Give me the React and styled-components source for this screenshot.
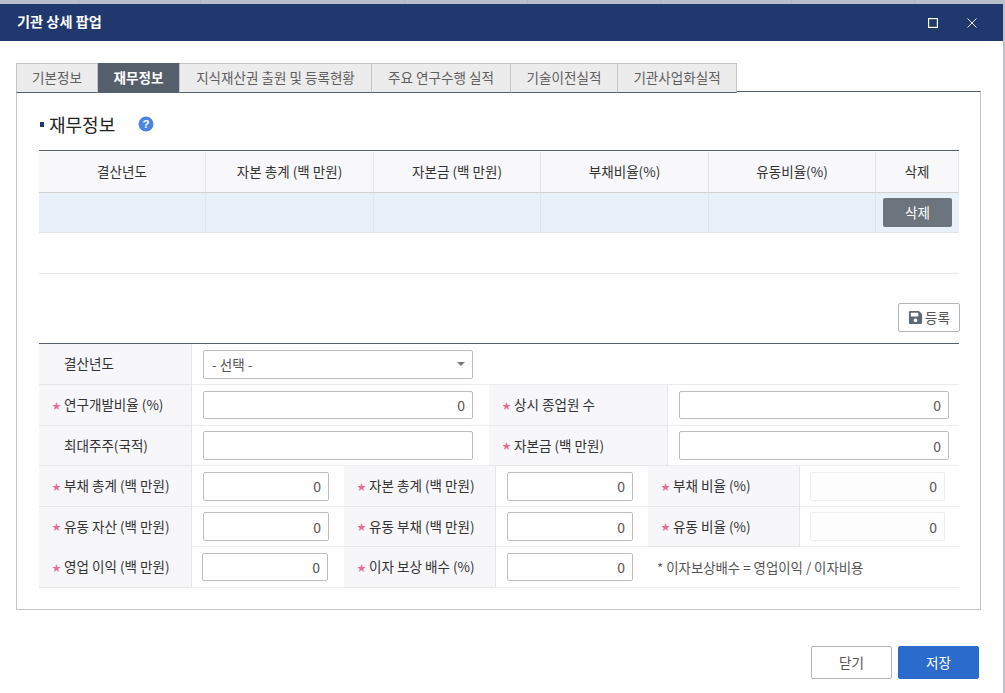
import React from "react";
import styled, { createGlobalStyle } from "styled-components";
import { FaSave } from "react-icons/fa";

const GlobalStyle = createGlobalStyle`
  html, body {
    margin: 0;
    padding: 0;
    background: #bfc1c4;
    overflow: hidden;
  }
  body {
    font-family: "Noto Sans CJK KR", "Noto Sans", sans-serif;
    font-size: 13.55px;
    color: #333;
  }
`;

const Page = styled.div`
  width: 1005px;
  height: 693px;
`;

const TopStrip = styled.div`
  height: 4px;
  background: #b9c0cb;
  display: grid;
  grid-template-columns: 79px 122px 204px 123px 133px 131px 123px 1fr;
`;

const StripCell = styled.div`
  border-right: 1px solid #b0b6c0;
  &:last-child {
    border-right: 0;
  }
`;

const Modal = styled.div`
  width: 1003px;
  height: 689px;
  background: #fff;
  display: flex;
  flex-direction: column;
`;

const TitleBar = styled.div`
  height: 37px;
  flex: none;
  background: #20386e;
  color: #fff;
  display: flex;
  align-items: center;
  padding: 0 26px 0 17px;
`;

const Title = styled.div`
  flex: 1;
  font-size: 14.2px;
  font-weight: 700;
  padding-bottom: 3px;
`;

const WindowButtons = styled.div`
  display: flex;
  align-items: center;
  gap: 29px;
`;

const Body = styled.div`
  padding: 22px 22px 0 16px;
  flex: 1;
`;

const Tabs = styled.div`
  display: flex;
  height: 30px;
  position: relative;
  z-index: 1;
`;

const Tab = styled.div`
  box-sizing: border-box;
  width: ${(p) => p.$w}px;
  height: 30px;
  padding-bottom: 2px;
  display: flex;
  align-items: center;
  justify-content: center;
  background: ${(p) => (p.$active ? "#555f6b" : "#ececec")};
  color: ${(p) => (p.$active ? "#fff" : "#5f5f5f")};
  font-weight: ${(p) => (p.$active ? 700 : 400)};
  border: 1px solid #c4c4c4;
  border-left-width: ${(p) => (p.$first ? 1 : 0)}px;
  border-bottom: 1px solid #555f6b;
  ${(p) => p.$active && "border-color: #555f6b; border-right-color: #c4c4c4;"}
`;

const Panel = styled.div`
  box-sizing: border-box;
  margin-top: -2px;
  width: 965px;
  height: 519px;
  border: 1px solid #c4c4c4;
  border-top-color: #555f6b;
  padding: 0 21px 0 22px;
`;

const Heading = styled.div`
  height: 58px;
  display: flex;
  align-items: center;
  font-size: 18px;
  color: #222;
  padding-top: 6px;
  box-sizing: border-box;
`;

const Bullet = styled.span`
  width: 4px;
  height: 5px;
  background: #20386e;
  margin: 0 5px 0 1px;
`;

const HelpIcon = styled.svg`
  width: 16px;
  height: 16px;
  margin-left: 23px;
`;

const TableGrid = styled.div`
  display: grid;
  grid-template-columns: 167px 168px 167px 168px 167px 83px;
  border-top: 1px solid #555f6b;
  padding-top: 1px;
`;

const HeadCell = styled.div`
  box-sizing: border-box;
  height: 41px;
  padding-bottom: 2px;
  display: flex;
  align-items: center;
  justify-content: center;
  background: #f8f8fa;
  border-bottom: 1px solid #d2d2d2;
  border-right: 1px solid #e4e4e4;
  &:last-child {
    border-right: 0;
  }
`;

const DataCell = styled.div`
  box-sizing: border-box;
  height: 40px;
  display: flex;
  align-items: center;
  justify-content: center;
  background: #e8f0fa;
  border-bottom: 1px solid #e4e4e4;
  border-right: 1px solid #e4e4e4;
  &:last-child {
    border-right: 0;
  }
`;

const DeleteButton = styled.div`
  box-sizing: border-box;
  width: 69px;
  height: 29px;
  padding-bottom: 2px;
  border-radius: 2px;
  background: #6c757d;
  color: #fff;
  display: flex;
  align-items: center;
  justify-content: center;
`;

const EmptyRow = styled.div`
  box-sizing: border-box;
  height: 41px;
  border-bottom: 1px solid #e9e9e9;
`;

const FormActions = styled.div`
  display: flex;
  justify-content: flex-end;
  margin: 29px -1px 11px 0;
`;

const RegisterButton = styled.div`
  box-sizing: border-box;
  width: 62px;
  height: 29px;
  padding-bottom: 2px;
  border: 1px solid #b4b4b4;
  border-radius: 2px;
  display: flex;
  align-items: center;
  justify-content: center;
  gap: 2px;
  color: #555;
  svg {
    color: #5c6873;
    margin-top: 1px;
  }
`;

const Form = styled.div`
  border-top: 1px solid #555f6b;
`;

const Row = styled.div`
  display: grid;
  height: ${(p) => p.$h || 41}px;
  grid-template-columns: ${(p) => p.$cols};
`;

const Label = styled.div`
  box-sizing: border-box;
  display: flex;
  align-items: center;
  padding: 0 0 2px 25px;
  background: #f7f7fa;
  color: #333;
  border-bottom: 1px solid ${(p) => (p.$merged ? "#f7f7fa" : "#e6e6e6")};
  border-right: 1px solid #e6e6e6;
  white-space: nowrap;
`;

const Star = styled.span`
  color: #ec6b94;
  font-size: 9px;
  width: 12px;
  margin: 2px 0 0 -12px;
`;

const Value = styled.div`
  box-sizing: border-box;
  display: flex;
  align-items: center;
  padding-left: ${(p) => p.$pad || 11}px;
  border-bottom: 1px solid #ececec;
`;

const Input = styled.div`
  box-sizing: border-box;
  width: ${(p) => p.$w}px;
  height: ${(p) => p.$h || 28}px;
  flex: none;
  border: 1px solid ${(p) => (p.$readOnly ? "#eeeeee" : "#bdbdbd")};
  border-radius: 2px;
  background: ${(p) => (p.$readOnly ? "#fdfdfd" : "#fff")};
  display: flex;
  align-items: center;
  justify-content: flex-end;
  padding-right: 7px;
  font-size: 14px;
  color: #555;
`;

const Select = styled.div`
  box-sizing: border-box;
  width: 270px;
  height: 29px;
  border: 1px solid #bdbdbd;
  border-radius: 2px;
  display: flex;
  align-items: center;
  justify-content: space-between;
  padding: 0 7px 0 8px;
  color: #555;
`;

const Caret = styled.span`
  width: 0;
  height: 0;
  border-left: 4px solid transparent;
  border-right: 4px solid transparent;
  border-top: 4px solid #777;
`;

const Note = styled.span`
  margin-left: 24px;
  font-size: 13.4px;
  color: #555;
  white-space: nowrap;
`;

const Footer = styled.div`
  display: flex;
  justify-content: flex-end;
  gap: 6px;
  margin: 36px 2px 0 0;
`;

const FooterButton = styled.div`
  box-sizing: border-box;
  width: 81px;
  height: 33px;
  padding-bottom: 2px;
  border-radius: 2px;
  border: 1px solid ${(p) => (p.$primary ? "#2b6bcb" : "#b4b4b4")};
  background: ${(p) => (p.$primary ? "#2b6bcb" : "#fff")};
  color: ${(p) => (p.$primary ? "#fff" : "#555")};
  display: flex;
  align-items: center;
  justify-content: center;
`;

const tabs = [
  { label: "기본정보", w: 82 },
  { label: "재무정보", w: 82, active: true },
  { label: "지식재산권 출원 및 등록현황", w: 192 },
  { label: "주요 연구수행 실적", w: 139 },
  { label: "기술이전실적", w: 107 },
  { label: "기관사업화실적", w: 119 },
];

const headers = ["결산년도", "자본 총계 (백 만원)", "자본금 (백 만원)", "부채비율(%)", "유동비율(%)", "삭제"];

const COLS_2 = "153px 297px 179px 291px";
const COLS_3 = "153px 152px 152px 152px 152px 159px";

const Field = ({ label, required, merged }) => (
  <Label $merged={merged}>
    {required && <Star>★</Star>}
    {label}
  </Label>
);

const App = () => {
  return (
    <Page>
      <GlobalStyle />
      <TopStrip>
        {Array.from({ length: 8 }, (_, i) => (
          <StripCell key={i} />
        ))}
      </TopStrip>
      <Modal>
        <TitleBar>
          <Title>기관 상세 팝업</Title>
          <WindowButtons>
            <svg width="10" height="10" viewBox="0 0 10 10">
              <rect x="0.6" y="0.6" width="8.8" height="8.8" fill="none" stroke="#fff" strokeWidth="1.2" />
            </svg>
            <svg width="10" height="10" viewBox="0 0 10 10">
              <path d="M0.5 0.5L9.5 9.5M9.5 0.5L0.5 9.5" stroke="#fff" strokeWidth="0.9" />
            </svg>
          </WindowButtons>
        </TitleBar>
        <Body>
          <Tabs>
            {tabs.map((t, i) => (
              <Tab key={t.label} $w={t.w} $active={t.active} $first={i === 0}>
                {t.label}
              </Tab>
            ))}
          </Tabs>
          <Panel>
            <Heading>
              <Bullet />
              재무정보
              <HelpIcon viewBox="0 0 16 16">
                <circle cx="8" cy="8" r="7.5" fill="#4a86e0" />
                <text x="8" y="12" textAnchor="middle" fontSize="11.5" fontWeight="700" fill="#fff" fontFamily="Liberation Sans, sans-serif">?</text>
              </HelpIcon>
            </Heading>
            <TableGrid>
              {headers.map((h) => (
                <HeadCell key={h}>{h}</HeadCell>
              ))}
              {headers.map((h, i) => (
                <DataCell key={h}>{i === 5 && <DeleteButton>삭제</DeleteButton>}</DataCell>
              ))}
            </TableGrid>
            <EmptyRow />
            <FormActions>
              <RegisterButton>
                <FaSave size={15} />
                등록
              </RegisterButton>
            </FormActions>
            <Form>
              <Row $cols="153px 767px">
                <Field label="결산년도" />
                <Value>
                  <Select>
                    - 선택 -
                    <Caret />
                  </Select>
                </Value>
              </Row>
              <Row $cols={COLS_2}>
                <Field label="연구개발비율 (%)" required />
                <Value><Input $w={270}>0</Input></Value>
                <Field label="상시 종업원 수" required />
                <Value><Input $w={270}>0</Input></Value>
              </Row>
              <Row $cols={COLS_2} $h={40}>
                <Field label="최대주주(국적)" />
                <Value><Input $w={270} $h={29} /></Value>
                <Field label="자본금 (백 만원)" required />
                <Value><Input $w={270} $h={29}>0</Input></Value>
              </Row>
              <Row $cols={COLS_3}>
                <Field label="부채 총계 (백 만원)" required />
                <Value><Input $w={126} $h={29}>0</Input></Value>
                <Field label="자본 총계 (백 만원)" required />
                <Value><Input $w={126} $h={29}>0</Input></Value>
                <Field label="부채 비율 (%)" required />
                <Value $pad={10}><Input $w={135} $h={29} $readOnly>0</Input></Value>
              </Row>
              <Row $cols={COLS_3} $h={40}>
                <Field label="유동 자산 (백 만원)" required merged />
                <Value><Input $w={126} $h={29}>0</Input></Value>
                <Field label="유동 부채 (백 만원)" required />
                <Value><Input $w={126} $h={29}>0</Input></Value>
                <Field label="유동 비율 (%)" required />
                <Value $pad={10}><Input $w={135} $h={29} $readOnly>0</Input></Value>
              </Row>
              <Row $cols="153px 152px 152px 463px">
                <Field label="영업 이익 (백 만원)" required />
                <Value $pad={10}><Input $w={126}>0</Input></Value>
                <Field label="이자 보상 배수 (%)" required />
                <Value>
                  <Input $w={126}>0</Input>
                  <Note>* 이자보상배수 = 영업이익 / 이자비용</Note>
                </Value>
              </Row>
            </Form>
          </Panel>
          <Footer>
            <FooterButton>닫기</FooterButton>
            <FooterButton $primary>저장</FooterButton>
          </Footer>
        </Body>
      </Modal>
    </Page>
  );
};

export default App;
